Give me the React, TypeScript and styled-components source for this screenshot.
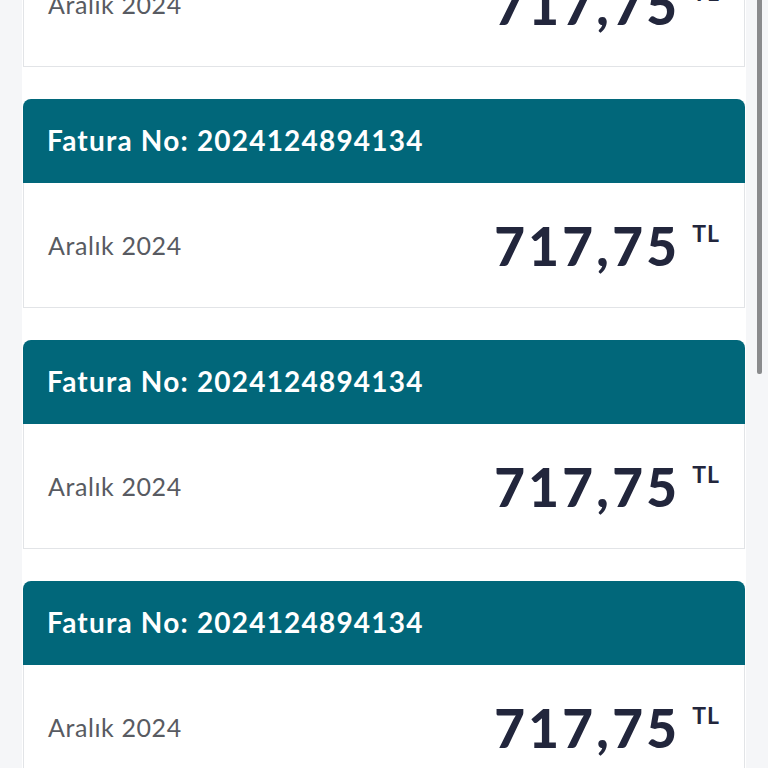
import React from 'react'
import styled, { createGlobalStyle } from 'styled-components'

interface Invoice {
  id: number;
  number: string;
  period: string;
  amount: string;
}

const invoices: Invoice[] = Array.from({ length: 7 }, (_, i) => ({
  id: i,
  number: '2024124894134',
  period: 'Aralık 2024',
  amount: '717,75',
}))

const GlobalStyle = createGlobalStyle`
  html, body {
    margin: 0;
    padding: 0;
    background: #f5f6f8;
    font-family: Lato, 'Noto Sans', 'DejaVu Sans', sans-serif;
  }
  * { box-sizing: border-box; }
`

const InvoiceCard: React.FC<{ invoice: Invoice }> = ({ invoice }) => {
  return (
    <CardStyled>
      <CardHeader>Fatura No: {invoice.number}</CardHeader>
      <CardBody>
        <Period>{invoice.period}</Period>
        <Amount>
          {invoice.amount}
          <Currency>TL</Currency>
        </Amount>
      </CardBody>
    </CardStyled>
  )
}

const App: React.FC = () => {
  return (
    <>
      <GlobalStyle />
      <Page>
        <Column>
          <List>
            {invoices.map((inv) => (
              <InvoiceCard key={inv.id} invoice={inv} />
            ))}
          </List>
        </Column>
        <ScrollTrack>
          <ScrollThumb />
        </ScrollTrack>
      </Page>
    </>
  )
}

const Page = styled.div`
display: flex;
height: 100vh;
overflow: hidden;
background: #f5f6f8;
padding-left: 22px;
`

const Column = styled.div`
flex: 0 0 724px;
background: #ffffff;
padding: 0 1px 60px 1px;
overflow: hidden;
`

const ScrollTrack = styled.div`
flex: 1;
display: flex;
justify-content: flex-start;
padding-left: 11px;
`

const ScrollThumb = styled.div`
width: 5px;
height: 374px;
background: #8a8b8d;
border-radius: 0 0 2px 2px;
`

const List = styled.div`
display: flex;
flex-direction: column;
gap: 32px;
margin-top: -142px;
`

const CardStyled = styled.div`
display: flex;
flex-direction: column;
border-radius: 8px 8px 0 0;
overflow: hidden;
`

const CardHeader = styled.div`
height: 84px;
display: flex;
align-items: center;
padding: 0 24px 2px 24px;
background: #01677a;
color: #ffffff;
font-size: 28px;
font-weight: 700;
letter-spacing: 1.2px;
`

const CardBody = styled.div`
height: 125px;
display: flex;
align-items: center;
justify-content: space-between;
padding: 0 24px;
background: #ffffff;
border: 1px solid #e2e4e7;
border-top: none;
`

const Period = styled.p`
margin: 0;
color: #585b62;
font-size: 25px;
font-weight: 400;
letter-spacing: 0.6px;
`

const Amount = styled.p`
margin: 0;
display: flex;
align-items: flex-start;
gap: 12px;
color: #22263c;
font-size: 53px;
font-weight: 900;
letter-spacing: 3.3px;
line-height: 1;
`

const Currency = styled.span`
font-size: 23px;
font-weight: 700;
letter-spacing: 1px;
margin-top: 3px;
`

export default App
